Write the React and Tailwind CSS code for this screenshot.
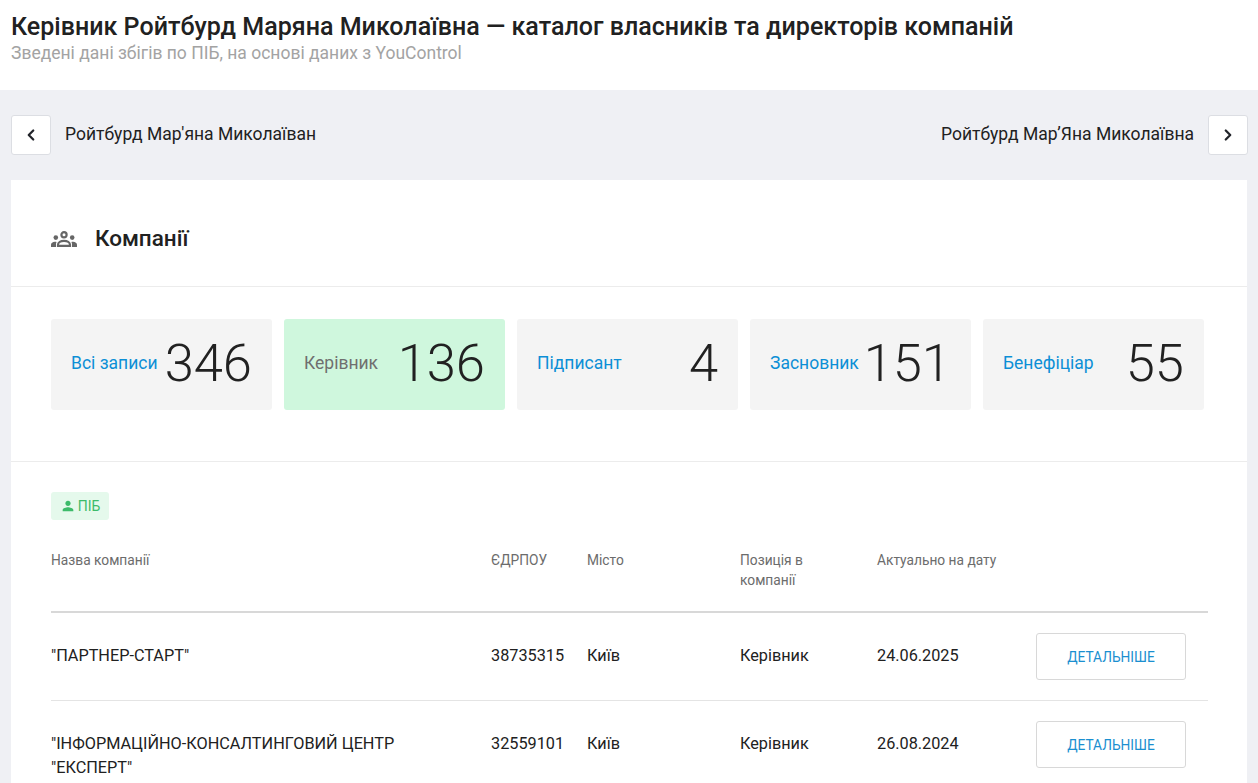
import { ChevronLeft, ChevronRight } from "lucide-react";

const stats = [
  { label: "Всі записи", value: 346 },
  { label: "Керівник", value: 136, active: true },
  { label: "Підписант", value: 4 },
  { label: "Засновник", value: 151 },
  { label: "Бенефіціар", value: 55 },
];

const rows = [
  { name: '"ПАРТНЕР-СТАРТ"', code: "38735315", city: "Київ", role: "Керівник", date: "24.06.2025" },
  { name: '"ІНФОРМАЦІЙНО-КОНСАЛТИНГОВИЙ ЦЕНТР "ЕКСПЕРТ"', code: "32559101", city: "Київ", role: "Керівник", date: "26.08.2024" },
];

const gridCols = "grid grid-cols-[440px_96px_153px_137px_159px_172px]";

function NavButton({ children }) {
  return (
    <button className="flex h-10 w-10 shrink-0 items-center justify-center rounded-[3px] border border-[#dcdee3] bg-white text-[#22242a]">
      {children}
    </button>
  );
}

function GroupIcon() {
  return (
    <svg width="26" height="16" viewBox="0 0 26 16" fill="#666666" className="shrink-0">
      <circle cx="13" cy="3.8" r="2.6" fill="none" stroke="#666666" strokeWidth="2.2" />
      <circle cx="4.8" cy="6.6" r="2.3" />
      <circle cx="21.2" cy="6.6" r="2.3" />
      <path d="M7 14.8v-1c0-2.3 2.7-3.9 6-3.9s6 1.6 6 3.9v1z" fill="none" stroke="#666666" strokeWidth="2.2" />
      <path d="M0 16v-2.2c0-1.6 1.6-3 4-3 .6 0 1.1.1 1.6.2-.5.7-.6 1.6-.6 2.6V16z" />
      <path d="M26 16v-2.2c0-1.6-1.6-3-4-3-.6 0-1.1.1-1.6.2.5.7.6 1.6.6 2.6V16z" />
    </svg>
  );
}

export default function App() {
  return (
    <div className="h-screen overflow-hidden bg-[#eff0f4] font-['Roboto',sans-serif] text-[#212121]">
      <header className="h-[90px] bg-white px-[11px] pt-[11px]">
        <h1 className="text-[25.05px] leading-[32px] font-medium">
          Керівник Ройтбурд Маряна Миколаївна — каталог власників та директорів компаній
        </h1>
        <p className="text-[17.5px] leading-[20px] text-[#a3a3a3]">
          Зведені дані збігів по ПІБ, на основі даних з YouControl
        </p>
      </header>

      <nav className="flex items-center justify-between py-[25px] pr-[10px] pl-[11px]">
        <div className="flex items-center gap-[14px]">
          <NavButton>
            <ChevronLeft size={18} strokeWidth={3} />
          </NavButton>
          <span className="pb-[2px] text-[17.5px] leading-[38px]">Ройтбурд Мар'яна Миколаїван</span>
        </div>
        <div className="flex items-center gap-[14px]">
          <span className="pb-[2px] text-[17.5px] leading-[38px]">Ройтбурд Мар’Яна Миколаївна</span>
          <NavButton>
            <ChevronRight size={18} strokeWidth={3} />
          </NavButton>
        </div>
      </nav>

      <main className="mx-[11px] bg-white">
        <div className="flex h-[107px] items-center gap-[18px] border-b border-[#ececec] px-[40px] pt-[12px]">
          <GroupIcon />
          <h2 className="text-[22.5px] font-medium">Компанії</h2>
        </div>

        <div className="flex gap-3 border-b border-[#ececec] pt-[32px] pr-[43px] pb-[51px] pl-[40px]">
          {stats.map((s) => (
            <div
              key={s.label}
              className={
                s.active
                  ? "flex h-[91px] w-[221px] items-center justify-between rounded-[3px] bg-[#cff7dd] px-[20px] pb-[2px]"
                  : "flex h-[91px] w-[221px] items-center justify-between rounded-[3px] bg-[#f4f4f4] px-[20px] pb-[2px]"
              }
            >
              <span className={s.active ? "text-[17.5px] text-[#6f6f6f]" : "text-[17.5px] text-[#0c8fd6]"}>
                {s.label}
              </span>
              <span className="text-[52.5px] leading-none font-light text-[#212121]">{s.value}</span>
            </div>
          ))}
        </div>

        <div className="pt-[30px] pr-[39px] pl-[40px]">
          <span className="inline-flex h-[28px] w-[58px] items-center justify-center gap-[2px] rounded-[3px] bg-[#e5f9ec] text-[14px] text-[#3dbb6a]">
            <svg width="16" height="16" viewBox="0 0 24 24" fill="currentColor">
              <path d="M12 12c2.21 0 4-1.79 4-4s-1.79-4-4-4-4 1.79-4 4 1.79 4 4 4zm0 2c-2.67 0-8 1.34-8 4v2h16v-2c0-2.66-5.33-4-8-4z" />
            </svg>
            ПІБ
          </span>

          <div className={`${gridCols} mt-[29px] h-[63px] border-b-2 border-[#d8d8d8] text-[13.75px] leading-[20px] text-[#6c6c6c]`}>
            <div>Назва компанії</div>
            <div>ЄДРПОУ</div>
            <div>Місто</div>
            <div className="w-[90px]">Позиція в компанії</div>
            <div>Актуально на дату</div>
            <div />
          </div>

          {rows.map((r) => (
            <div
              key={r.code}
              className={`${gridCols} min-h-[88px] items-start border-b border-[#e4e4e4] text-[16.25px] leading-[24px] text-[#212121]`}
            >
              <div className="w-[400px] pt-[31px] pb-[20px]">{r.name}</div>
              <div className="pt-[31px]">{r.code}</div>
              <div className="pt-[31px]">{r.city}</div>
              <div className="pt-[31px]">{r.role}</div>
              <div className="pt-[31px]">{r.date}</div>
              <div className="pt-[20px] pb-[20px]">
                <button className="h-[47px] w-[150px] rounded-[3px] border border-[#d8d8d8] bg-white text-[13.75px] text-[#1b8fd0]">
                  ДЕТАЛЬНІШЕ
                </button>
              </div>
            </div>
          ))}
        </div>
      </main>
    </div>
  );
}
